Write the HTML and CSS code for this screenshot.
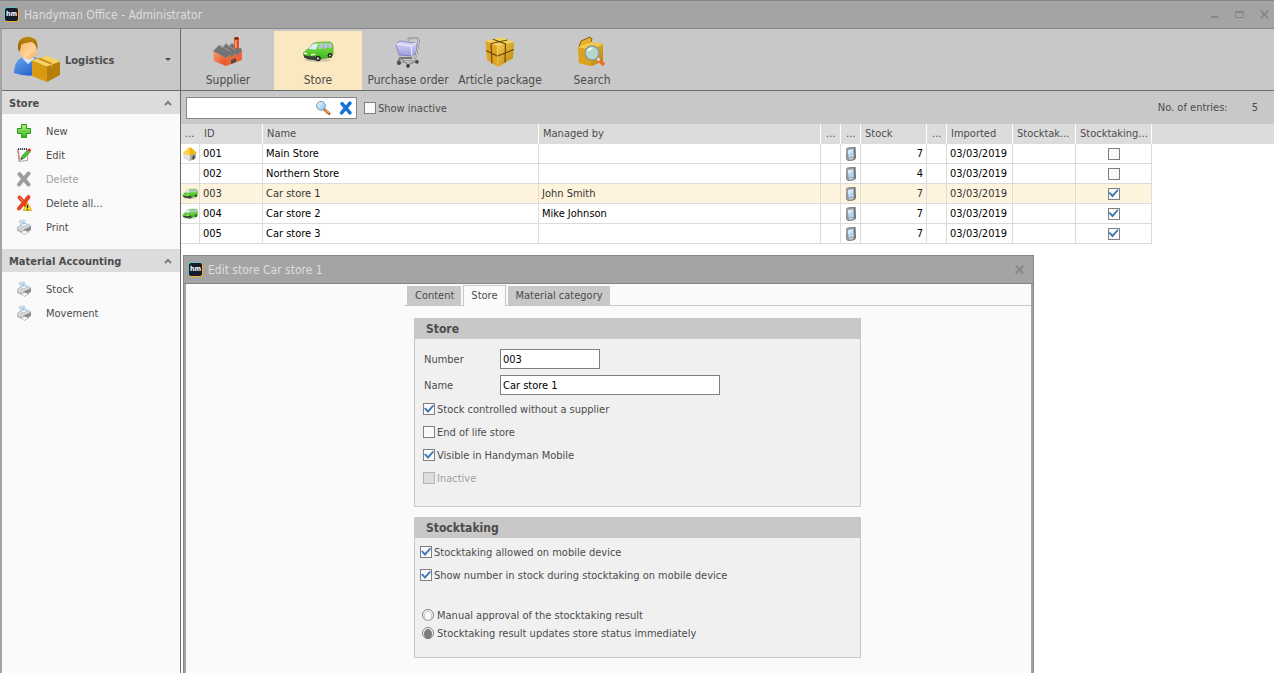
FILE: index.html
```html
<!DOCTYPE html>
<html lang="en">
<head>
<meta charset="utf-8">
<title>Handyman Office - Administrator</title>
<link rel="stylesheet" href="styles.css">
</head>
<body>
<svg class="defs" aria-hidden="true">
  <defs>
    <linearGradient id="gold" x1="0" y1="0" x2="1" y2="1"><stop offset="0" stop-color="#f7cd4a"/><stop offset="1" stop-color="#b97f08"/></linearGradient>
    <linearGradient id="skin" x1="0" y1="0" x2="1" y2="1"><stop offset="0" stop-color="#ffb565"/><stop offset=".6" stop-color="#ffd49a"/><stop offset="1" stop-color="#f4a04c"/></linearGradient>
    <linearGradient id="shirt" x1="0" y1="0" x2="1" y2="1"><stop offset="0" stop-color="#6ba6f2"/><stop offset="1" stop-color="#1553c0"/></linearGradient>
    <linearGradient id="hair" x1="0" y1="0" x2="0" y2="1"><stop offset="0" stop-color="#c28a0c"/><stop offset="1" stop-color="#8a5c04"/></linearGradient>
    <linearGradient id="brick" x1="0" y1="0" x2="1" y2="1"><stop offset="0" stop-color="#ff9a74"/><stop offset="1" stop-color="#e04c1e"/></linearGradient>
    <linearGradient id="plus" x1="0" y1="0" x2="0" y2="1"><stop offset="0" stop-color="#b4f07c"/><stop offset="1" stop-color="#35b61c"/></linearGradient>
    <linearGradient id="lens" x1="0" y1="0" x2="1" y2="1"><stop offset="0" stop-color="#e8fbff"/><stop offset="1" stop-color="#86c4ee"/></linearGradient>
    <linearGradient id="paint" x1="0" y1="0" x2="0" y2="1"><stop offset="0" stop-color="#8ee85a"/><stop offset="1" stop-color="#34b414"/></linearGradient>
    <linearGradient id="basket" x1="0" y1="0" x2="0" y2="1"><stop offset="0" stop-color="#dedcf8"/><stop offset="1" stop-color="#9a9ade"/></linearGradient>
  </defs>
  <symbol id="i-user" viewBox="0 0 48 48">
    <path d="M1 36Q2 21 13 21H20Q29 22 29 36V38Q15 42 1 37Z" fill="url(#shirt)"/>
    <path d="M9 22L15 28L22 22Z" fill="#d8e8ff"/>
    <ellipse cx="15.500" cy="14" rx="8.500" ry="9.500" fill="url(#skin)"/>
    <path d="M6 16Q3 7 8 3Q13 -1 20 2Q26 5 24 14Q23 8 19 6Q10 7 8 9Q8 13 6 16Z" fill="url(#hair)"/>
    <path d="M19 24L34 20L47 25L34 30Z" fill="#f6d25e"/>
    <path d="M19 24L34 30V46L19 40Z" fill="#d99a12"/>
    <path d="M34 30L47 25V39L34 46Z" fill="#b77f0a"/>
    <path d="M24 22.500L37.500 28.500V32L40 31V27.500L27 21.700Z" fill="#c58d14"/>
    <path d="M19 24L34 30L47 25" fill="none" stroke="#fbe08a" stroke-width=".7"/>
  </symbol>
  <symbol id="i-factory" viewBox="0 0 32 32">
    <path d="M22 3L23 1H26L27 3V16H22Z" fill="#e2502c"/><path d="M22 3Q24.500 4.500 27 3L26 1H23Z" fill="#93291a"/>
    <path d="M23 4H24.500V12H23Z" fill="#ff9a80"/>
    <path d="M1 15L14 22V30L2 25Z" fill="url(#brick)"/>
    <path d="M14 22L18 19L19 22L23 17L24 20L30 15V24L14 30Z" fill="#ee6236"/>
    <path d="M1 15L7 9L11 11L14 7.500L17 10L20 7L22 9V13L29 12L30 15L24 20L23 17L19 22L18 19L14 22Z" fill="#737373"/>
    <path d="M2 14.500L7 9L18 15M9 12L14 7.500L23 14M16 11L20 7" fill="none" stroke="#a6a6a6" stroke-width=".8"/>
    <path d="M19 24L24 22V26L19 28Z" fill="#554b49"/>
  </symbol>
  <symbol id="i-van" viewBox="0 0 32 22">
    <ellipse cx="16" cy="19" rx="13" ry="2" fill="#8a8a8a" opacity=".35"/>
    <path d="M1.500 12Q4 9 7 7.500L11 2.500Q14 1 22 1H28.500Q31 2 31 6V13.500L27 16.500L13 19L3 16.500Q1 15 1.500 12Z" fill="url(#paint)" stroke="#3a8d1c" stroke-width=".6"/>
    <path d="M6.500 8L11 3L16 2.500L14 8.500Z" fill="#dfe9ff"/>
    <path d="M16.500 8L18 2.500H21V7.500ZM22 7.500V2.500H25.500V7ZM26.500 7V2.500H29L30 6.500Z" fill="#b9bfe8"/>
    <path d="M2 14Q7 16 13 15V19Q6 19 2 16.500Z" fill="#3c4140"/>
    <path d="M2 11.500L5 12V13.500L2 13ZM9 13L13 12.500V14L9 14.500Z" fill="#fffbd8"/>
    <circle cx="16" cy="17.500" r="2.800" fill="#242424"/><circle cx="16" cy="17.500" r="1.200" fill="#c8c8c8"/>
    <circle cx="28" cy="14.500" r="2.400" fill="#242424"/><circle cx="28" cy="14.500" r="1" fill="#c8c8c8"/>
  </symbol>
  <symbol id="i-cart" viewBox="0 0 32 32">
    <path d="M4 8L8 5L22 7L25 6V17L20 20L7 19Z" fill="url(#basket)" stroke="#7775b8" stroke-width=".8"/>
    <path d="M4 8L19 10L25 6M19 10L20 20" fill="none" stroke="#f5f5ff"/>
    <path d="M16 4L18 2H25L27 5L24 20L22 25L6 26L8 22L20 22" fill="none" stroke="#777" stroke-width="1.800"/>
    <path d="M16 4L18 2H25L27 5L24 20L22 25L6 26" fill="none" stroke="#dedede" stroke-width=".9"/>
    <path d="M8 22L16 29L26 24" fill="none" stroke="#8d8d8d" stroke-width="1.400"/>
    <circle cx="7" cy="27" r="2" fill="#444"/><circle cx="16" cy="30" r="1.800" fill="#333"/><circle cx="25" cy="26" r="1.800" fill="#444"/>
  </symbol>
  <symbol id="i-package" viewBox="0 0 32 32">
    <path d="M1.500 5L17 1.500L30 6L13 10Z" fill="#f8d45c"/>
    <path d="M13 10L30 6L29 22L14 31Z" fill="url(#gold)"/>
    <path d="M1.500 5L13 10L14 31L3 24Z" fill="#e1a324"/>
    <path d="M9 3.300L21.500 8L21 26.500M7 7.500L23.500 4M7 7.500L8 27.500M2 14.500L13.500 20L30 13.500" fill="none" stroke="#6e4a0b" stroke-width="1.200"/>
    <path d="M13 10L14 31" stroke="#f4c95a" stroke-width=".7"/>
  </symbol>
  <symbol id="i-boxsearch" viewBox="0 0 32 32">
    <path d="M3 11L5 5L14 1L16 3L15 6L6 11Z" fill="#e8ae2d" stroke="#8b5d09"/>
    <path d="M2 11L15 6L27 8V25L16 30L3 27Z" fill="url(#gold)"/>
    <path d="M2 11L15 14V30L3 27Z" fill="#dda11d"/><path d="M2 11L15 6L27 8L15 14Z" fill="#f5ca4e"/>
    <path d="M23 24L28 29" stroke="#f36a20" stroke-width="3.500"/><path d="M20.500 21.500L23.500 24.500" stroke="#dedede" stroke-width="2.500"/>
    <circle cx="16" cy="17" r="7" fill="#b5d7cb" stroke="#8b9794" stroke-width="1.300"/>
    <path d="M11 15Q12 11 17 11.500Q15 15 11 15Z" fill="#f0fff8"/>
  </symbol>
  <symbol id="i-plus" viewBox="0 0 16 16"><path d="M5.500 1.500H10.500V5.500H14.500V10.500H10.500V14.500H5.500V10.500H1.500V5.500H5.500Z" fill="url(#plus)" stroke="#2c981c"/></symbol>
  <symbol id="i-edit" viewBox="0 0 16 16">
    <path d="M1.500 2.500L9 2L12 4L11.500 13.500L3 14.500Z" fill="#fbfbff" stroke="#8a8f9a" stroke-width=".8"/><path d="M2 3L4 14" stroke="#e87770" stroke-width="1.200"/><path d="M2 2H11" stroke="#4b4b55" stroke-dasharray="1 1" stroke-width="2"/>
    <path d="M5 12.500L6 9L11.500 3L14 5L8.500 11Z" fill="#4cc531" stroke="#23831b" stroke-width=".7"/><path d="M11.500 3L13 1.200L15.300 3L14 5Z" fill="#e12d2d"/><path d="M5 12.500L5.500 10.500L7 12Z" fill="#333"/>
  </symbol>
  <symbol id="i-cross" viewBox="0 0 16 16"><path d="M3.500 3L7.500 8L3 13.500M12.500 2.500L8 8L12.500 13.500" fill="none" stroke="currentColor" stroke-width="4" stroke-linecap="round"/></symbol>
  <symbol id="i-deleteall" viewBox="0 0 16 16">
    <path d="M3.500 2.500L8 7.500L3 13.500M12.500 2L8 8L11 12" fill="none" stroke="#e8401c" stroke-width="3.800" stroke-linecap="round"/><path d="M3.500 2.500L7 6" stroke="#ff9a7c"/>
    <path d="M11.500 7.500L15.700 15.500H7.300Z" fill="#ffdf25" stroke="#c89300" stroke-width=".7"/><path d="M11.500 10V13M11.500 13.800V15" stroke="#222" stroke-width="1.300"/>
  </symbol>
  <symbol id="i-print" viewBox="0 0 16 16">
    <path d="M1 8.500L4 6.500L12 5L15 7L8 10.500Z" fill="#dedede" stroke="#a0a0a0" stroke-width=".5"/>
    <path d="M3 2L8 1L11 6.500L6 8Z" fill="#f4faff" stroke="#8aa2b5" stroke-width=".6"/><path d="M5 3.500L8 3M5.800 5L9 4.500" stroke="#75b4e8"/>
    <path d="M1 8.500L8 10.500V15L1 12Z" fill="#bcbcbc"/><path d="M8 10.500L15 7V11L8 15Z" fill="#8c8c8c"/>
    <path d="M5 12.500L9 11.500L13 13L8 15.500Z" fill="#fff" stroke="#888" stroke-width=".5"/><path d="M2 9.500L7 11.200" stroke="#eee"/>
  </symbol>
  <symbol id="i-find" viewBox="0 0 16 16">
    <path d="M9.500 9.500L14 13.500" stroke="#b55c23" stroke-width="3" stroke-linecap="round"/><path d="M10 9.500L14 13" stroke="#f6ae68" stroke-width="1.400"/>
    <circle cx="6" cy="5.800" r="4.400" fill="url(#lens)" stroke="#8295b0" stroke-width="1"/>
  </symbol>
  <symbol id="i-home" viewBox="0 0 16 16">
    <path d="M2 7L8 9V15L2 12Z" fill="#e4e4e4" stroke="#b8b8b8" stroke-width=".5"/><path d="M8 9L14 7V12L8 15Z" fill="#a9a9a9"/><path d="M10.500 10L12.500 9V13L10.500 14Z" fill="#444"/>
    <path d="M1 7L7 1.500H9L15 7L8 9.500Z" fill="#f2b313"/><path d="M1 7L7.500 1.500L8 9.500Z" fill="#ffd44a"/>
  </symbol>
  <symbol id="i-pda" viewBox="0 0 12 16">
    <path d="M1.500 2Q6 .500 10.500 1L11 12Q10 14 8 14.500L3 15L1 13Z" fill="#686b70"/><path d="M1.500 2Q5 1 9 1.500L9.500 13.500L3 14.500L1.500 13Z" fill="#989ca1"/>
    <path d="M3 4L8.500 3.500V11L3.500 11.500Z" fill="#b4d4f4"/><path d="M3 4L8.500 3.500L3.500 9Z" fill="#dcecfc"/><path d="M4 13L8 12.500" stroke="#e0e0e0"/>
  </symbol>
  <symbol id="i-up" viewBox="0 0 8 6"><path d="M1 5L4 2L7 5" fill="none" stroke="#7e7e7e" stroke-width="2"/></symbol>
  <symbol id="i-close" viewBox="0 0 10 9"><path d="M1.500 1L8.500 8M8.500 1L1.500 8" stroke="#868686" stroke-width="2"/><path d="M0 .500H3M7 .500H10M0 8.500H3M7 8.500H10" stroke="#868686"/></symbol>
</svg>

<div class="app">
  <header class="titlebar">
    <span class="logo">hm</span>
    <h1 class="title">Handyman Office - Administrator</h1>
    <div class="winbtns">
      <button type="button" aria-label="Minimize"><svg width="9" height="9"><path d="M1 7H8" stroke="#868686" stroke-width="2"/></svg></button>
      <button type="button" aria-label="Maximize"><svg width="9" height="9"><path d="M.5 1.500H8.500V7.500H.5Z" fill="none" stroke="#868686"/><path d="M0 2H9" stroke="#868686" stroke-width="2"/></svg></button>
      <button type="button" aria-label="Close"><svg width="9" height="9"><use href="#i-close"/></svg></button>
    </div>
  </header>
  <div class="frame">
    <aside class="sidebar">
      <button type="button" class="module"><svg class="s48"><use href="#i-user"/></svg><span>Logistics</span><i class="caret"></i></button>
      <section>
        <h2 class="side-head"><span>Store</span><svg class="up"><use href="#i-up"/></svg></h2>
        <nav class="side-list">
          <button type="button"><svg class="s16"><use href="#i-plus"/></svg><span>New</span></button>
          <button type="button"><svg class="s16"><use href="#i-edit"/></svg><span>Edit</span></button>
          <button type="button" disabled><svg class="s16"><use href="#i-cross"/></svg><span>Delete</span></button>
          <button type="button"><svg class="s16"><use href="#i-deleteall"/></svg><span>Delete all...</span></button>
          <button type="button"><svg class="s16"><use href="#i-print"/></svg><span>Print</span></button>
        </nav>
      </section>
      <section>
        <h2 class="side-head"><span>Material Accounting</span><svg class="up"><use href="#i-up"/></svg></h2>
        <nav class="side-list">
          <button type="button"><svg class="s16"><use href="#i-print"/></svg><span>Stock</span></button>
          <button type="button"><svg class="s16"><use href="#i-print"/></svg><span>Movement</span></button>
        </nav>
      </section>
    </aside>
    <main class="work">
      <nav class="toolbar">
        <button type="button"><svg class="s32"><use href="#i-factory"/></svg>Supplier</button>
        <button type="button" class="active"><svg class="s32"><use href="#i-van"/></svg>Store</button>
        <button type="button"><svg class="s32"><use href="#i-cart"/></svg>Purchase order</button>
        <button type="button"><svg class="s32"><use href="#i-package"/></svg>Article package</button>
        <button type="button"><svg class="s32"><use href="#i-boxsearch"/></svg>Search</button>
      </nav>
      <div class="filter">
        <div class="search">
          <input type="text" aria-label="Search">
          <button type="button" aria-label="Find"><svg class="s16"><use href="#i-find"/></svg></button>
          <button type="button" class="clear" aria-label="Clear"><svg class="s14"><use href="#i-cross"/></svg></button>
        </div>
        <label class="check"><input type="checkbox"><span>Show inactive</span></label>
        <div class="count"><span>No. of entries:</span><span>5</span></div>
      </div>
      <table class="grid">
        <colgroup><col class="c19"><col class="c63"><col class="c276"><col class="c282"><col class="c20"><col class="c20"><col class="c66"><col class="c20"><col class="c66"><col class="c63"><col class="c76"><col></colgroup>
        <thead><tr><th class="none">...</th><th>ID</th><th>Name</th><th>Managed by</th><th class="mid">...</th><th class="mid">...</th><th>Stock</th><th class="mid">...</th><th>Imported</th><th>Stocktak...</th><th>Stocktaking...</th><th class="none"></th></tr></thead>
        <tbody>
          <tr><td class="ico"><svg class="s16"><use href="#i-home"/></svg></td><td>001</td><td>Main Store</td><td></td><td></td><td class="ico"><svg class="pda"><use href="#i-pda"/></svg></td><td class="num">7</td><td></td><td>03/03/2019</td><td></td><td class="ico"><input type="checkbox" aria-label="Stocktaking 001"></td><td class="rest"></td></tr>
          <tr><td></td><td>002</td><td>Northern Store</td><td></td><td></td><td class="ico"><svg class="pda"><use href="#i-pda"/></svg></td><td class="num">4</td><td></td><td>03/03/2019</td><td></td><td class="ico"><input type="checkbox" aria-label="Stocktaking 002"></td><td class="rest"></td></tr>
          <tr class="sel"><td class="ico"><svg class="s16"><use href="#i-van"/></svg></td><td>003</td><td>Car store 1</td><td>John Smith</td><td></td><td class="ico"><svg class="pda"><use href="#i-pda"/></svg></td><td class="num">7</td><td></td><td>03/03/2019</td><td></td><td class="ico"><input type="checkbox" checked aria-label="Stocktaking 003"></td><td class="rest"></td></tr>
          <tr><td class="ico"><svg class="s16"><use href="#i-van"/></svg></td><td>004</td><td>Car store 2</td><td>Mike Johnson</td><td></td><td class="ico"><svg class="pda"><use href="#i-pda"/></svg></td><td class="num">7</td><td></td><td>03/03/2019</td><td></td><td class="ico"><input type="checkbox" checked aria-label="Stocktaking 004"></td><td class="rest"></td></tr>
          <tr><td></td><td>005</td><td>Car store 3</td><td></td><td></td><td class="ico"><svg class="pda"><use href="#i-pda"/></svg></td><td class="num">7</td><td></td><td>03/03/2019</td><td></td><td class="ico"><input type="checkbox" checked aria-label="Stocktaking 005"></td><td class="rest"></td></tr>
        </tbody>
      </table>
      <section class="dialog" role="dialog" aria-labelledby="dlg-title">
        <header class="dialog-bar">
          <span class="logo">hm</span>
          <h2 class="title" id="dlg-title">Edit store Car store 1</h2>
          <button type="button" aria-label="Close dialog"><svg width="9" height="9"><use href="#i-close"/></svg></button>
        </header>
        <div class="dialog-body">
          <div class="tabs" role="tablist">
            <button type="button" role="tab">Content</button>
            <button type="button" role="tab" aria-selected="true">Store</button>
            <button type="button" role="tab">Material category</button>
          </div>
          <form class="groups">
            <section class="group">
              <h3>Store</h3>
              <div class="group-body">
                <div class="field"><label for="num">Number</label><input id="num" class="short" type="text" value="003"></div>
                <div class="field"><label for="name">Name</label><input id="name" type="text" value="Car store 1"></div>
                <div class="checks">
                  <label class="check"><input type="checkbox" checked><span>Stock controlled without a supplier</span></label>
                  <label class="check"><input type="checkbox"><span>End of life store</span></label>
                  <label class="check"><input type="checkbox" checked><span>Visible in Handyman Mobile</span></label>
                  <label class="check off"><input type="checkbox" disabled><span>Inactive</span></label>
                </div>
              </div>
            </section>
            <section class="group stocktaking">
              <h3>Stocktaking</h3>
              <div class="group-body">
                <div class="checks">
                  <label class="check"><input type="checkbox" checked><span>Stocktaking allowed on mobile device</span></label>
                  <label class="check"><input type="checkbox" checked><span>Show number in stock during stocktaking on mobile device</span></label>
                </div>
                <div class="radios">
                  <label class="check"><input type="radio" name="approval"><span>Manual approval of the stocktaking result</span></label>
                  <label class="check"><input type="radio" name="approval" checked><span>Stocktaking result updates store status immediately</span></label>
                </div>
              </div>
            </section>
          </form>
        </div>
      </section>
    </main>
  </div>
</div>
</body>
</html>
```
FILE: styles.css
```css
* { box-sizing: border-box; }
body {
  margin: 0;
  font: 11px/16px "DejaVu Sans Condensed", "Noto Sans", sans-serif;
  color: #4c4c4c;
  background: #fff;
}
button, input { font: inherit; color: inherit; }
button { border: 0; padding: 0; background: none; }
h1, h2, h3 { margin: 0; }
svg { display: block; flex: none; }
.defs { position: absolute; width: 0; height: 0; }
.s14 { width: 14px; height: 14px; }
.s16 { width: 16px; height: 16px; }
.s32 { width: 32px; height: 32px; }
.s48 { width: 48px; height: 48px; }
.pda { width: 12px; height: 16px; }
.logo {
  flex: none; width: 15px; height: 15px;
  border: 1px solid #64c4c4; border-right-color: #f0b030; border-bottom-color: #f0b030; border-radius: 3px;
  background: #141c2a; color: #fff;
  font: bold 7px/12px "DejaVu Sans Condensed", sans-serif; text-align: center;
}

.app { height: 100vh; min-height: 400px; display: flex; flex-direction: column; overflow: hidden; }
.titlebar {
  display: flex; align-items: center; gap: 5px;
  height: 29px; padding: 0 5px 0 4px;
  background: #a4a4a4; border-top: 1px solid #868686; border-bottom: 1px solid #868686;
}
.title { font-size: 12px; font-weight: normal; color: #dedede; }
.winbtns { display: flex; gap: 16px; margin-left: auto; }
.frame { flex: 1; display: flex; min-height: 0; border-left: 2px solid #a4a4a4; }

.sidebar { flex: none; width: 179px; border-right: 1px solid #6c6c6c; background: #fafafa; }
.module {
  display: flex; align-items: center; gap: 4px;
  width: 100%; height: 62px; padding: 0 9px 0 11px;
  background: #c8c8c8; border-bottom: 1px solid #6c6c6c;
  font-weight: bold;
}
.module span, .side-head span, .side-list span, .check span, .field label { padding-top: 2px; }
.caret { margin-left: auto; border: 3px solid transparent; border-top-color: #4c4c4c; border-bottom: 0; }
.side-head {
  display: flex; align-items: center; justify-content: space-between;
  height: 23px; padding: 0 8px 0 7px;
  font-size: 11px; background: #dcdcdc;
}
.up { width: 8px; height: 6px; }
.side-list { display: flex; flex-direction: column; padding: 5px 0 10px 14px; }
.side-list button { display: flex; align-items: center; gap: 14px; height: 24px; }
.side-list button:disabled { color: #a0a0a0; }
.side-list button:disabled svg { color: #9c9c9c; }

.work { flex: 1; min-width: 0; position: relative; }
.toolbar { display: flex; height: 62px; padding: 2px 0 0 1px; background: #c8c8c8; border-bottom: 1px solid #6c6c6c; }
.toolbar button {
  width: 92px; padding: 5px 0 0;
  display: flex; flex-direction: column; align-items: center; gap: 4px;
  font-size: 12px; white-space: nowrap;
}
.toolbar .active { width: 88px; background: #fae8c0; }
.filter { display: flex; align-items: center; gap: 7px; height: 33px; padding: 0 16px 0 5px; background: #c8c8c8; }
.search { display: flex; align-items: center; gap: 8px; width: 171px; height: 22px; padding-right: 3px; background: #fff; border: 1px solid #868686; }
.search input { flex: 1; min-width: 0; border: 0; padding: 0 4px; background: none; outline: 0; }
.clear { color: #1674d8; }
.count { display: flex; gap: 24px; margin-left: auto; }

.check { display: flex; align-items: center; height: 16px; gap: 2px; }
input[type="checkbox"], input[type="radio"] {
  appearance: none; flex: none; display: block;
  width: 12px; height: 12px; margin: 0;
  border: 1px solid #7e7e7e; background: #fafafa;
}
input[type="checkbox"]:checked::before {
  content: ""; display: block; height: 10px; background: #3c78b8;
  clip-path: polygon(0 45%, 15% 35%, 40% 60%, 88% 8%, 100% 20%, 40% 90%);
}
input[type="checkbox"]:disabled { background: #dcdcdc; border-color: #b4b4b4; }
input[type="radio"] { border-radius: 50%; padding: 1px; }
input[type="radio"]::before { content: ""; display: block; height: 8px; border: 1px solid #c8c8c8; border-radius: 50%; }
input[type="radio"]:checked::before { background: #7e7e7e; border-color: #7e7e7e; }

.grid { width: 100%; table-layout: fixed; border-collapse: separate; border-spacing: 0; }
.c19 { width: 19px; } .c20 { width: 20px; } .c63 { width: 63px; } .c66 { width: 66px; }
.c76 { width: 76px; } .c276 { width: 276px; } .c282 { width: 282px; }
.grid th, .grid td { height: 20px; padding: 0 3px; text-align: left; white-space: nowrap; overflow: hidden; }
.grid th { padding: 0 4px; font-weight: normal; background: #dcdcdc; border-right: 1px solid #fff; }
.grid th.none { border: 0; }
.grid th.mid { padding: 0 0 0 5px; }
.grid td { color: #000; border-right: 1px solid #dcdcdc; border-bottom: 1px solid #dcdcdc; }
.grid td.ico { padding: 0; }
.grid td.ico > * { margin: 0 auto; }
.grid td.num { text-align: right; }
.grid .sel td { background: #fef3dc; color: #333; }
.grid tbody td.rest { border: 0; background: none; }

.dialog {
  position: absolute; left: 2px; top: 226px; bottom: 0; width: 851px;
  display: flex; flex-direction: column;
  background: #a4a4a4; border: 1px solid #868686; border-bottom: 0;
}
.dialog-bar { display: flex; align-items: center; gap: 5px; height: 28px; padding: 0 9px 0 4px; border-bottom: 1px solid #868686; }
.dialog-bar button { margin-left: auto; }
.dialog-body { flex: 1; margin: 0 2px; padding-left: 218px; background: #fafafa; overflow: hidden; }
.tabs { display: flex; align-items: flex-end; gap: 2px; height: 22px; padding-left: 3px; border-bottom: 1px solid #c8c8c8; }
.tabs button { height: 19px; padding: 1px 7px 0 8px; background: #c8c8c8; }
.tabs button[aria-selected="true"] { height: 21px; margin-bottom: -1px; padding: 0 7px; background: #fafafa; border: 1px solid #c8c8c8; border-bottom: 0; }
.groups { display: flex; flex-direction: column; gap: 10px; max-width: 457px; padding: 12px 0 0 10px; }
.group { background: #f0f0f0; border: 1px solid #c8c8c8; }
.group h3 { height: 20px; padding-left: 11px; font-size: 12px; line-height: 20px; background: #c8c8c8; }
.group-body { padding: 10px 8px 20px; }
.field { display: flex; align-items: center; height: 20px; margin-bottom: 6px; }
.field label { width: 77px; padding-left: 1px; }
.field input { width: 220px; height: 20px; padding: 0 2px; border: 1px solid #7e7e7e; border-radius: 0; background: #fff; color: #000; }
.field .short { width: 100px; }
.checks { display: flex; flex-direction: column; gap: 7px; }
.off { color: #a0a0a0; }
.stocktaking .group-body { padding: 6px 5px 16px; }
.radios { display: flex; flex-direction: column; gap: 2px; padding: 24px 2px 0; }
.radios .check { gap: 3px; }
```
